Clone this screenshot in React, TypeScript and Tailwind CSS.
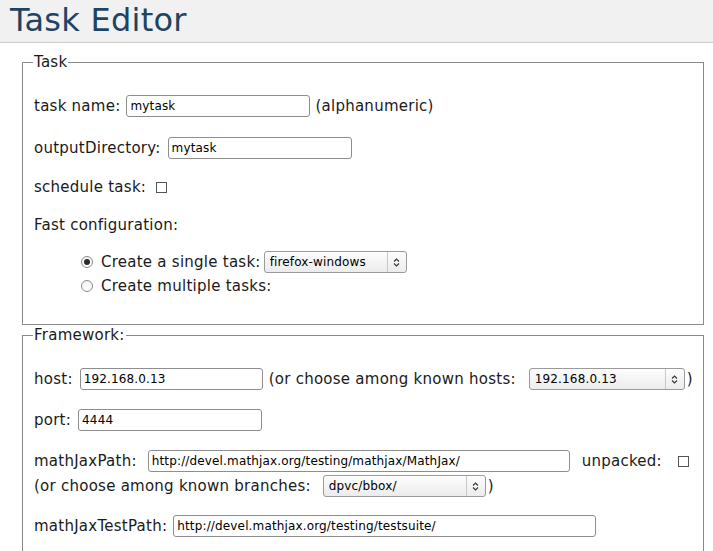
import React from "react";

const font = { fontFamily: '"DejaVu Sans", Verdana, sans-serif' };

function TextInput({ value, w }: { value: string; w: string }) {
  return (
    <div
      className={`${w} h-[22px] border border-[#8e8e8e] rounded-[3px] bg-white flex items-center px-[3px] text-[12px] tracking-[0.15px] text-black overflow-hidden whitespace-nowrap shrink-0`}
    >
      {value}
    </div>
  );
}

function Select({ value, w }: { value: string; w: string }) {
  return (
    <div
      className={`${w} h-[22px] border border-[#9a9a9a] rounded-[3px] bg-gradient-to-b from-[#fdfdfd] to-[#ececec] flex items-center text-[12px] tracking-[0.15px] text-black shrink-0`}
    >
      <span className="flex-1 pl-[5px] whitespace-nowrap overflow-hidden">{value}</span>
      <span className="w-[19px] h-full border-l border-[#c8c8c8] flex items-center justify-center">
        <svg width="7" height="11" viewBox="0 0 7 11">
          <path d="M1 4.5 L3.5 2 L6 4.5 M1 6.5 L3.5 9 L6 6.5" fill="none" stroke="#333" strokeWidth="1.1" />
        </svg>
      </span>
    </div>
  );
}

function Checkbox() {
  return <span className="inline-block w-[11px] h-[11px] border border-[#555] bg-white shrink-0" />;
}

function Radio({ checked }: { checked?: boolean }) {
  return (
    <span className="w-[12px] h-[12px] rounded-full border border-[#8a8a8a] bg-gradient-to-b from-[#f4f4f4] to-white flex items-center justify-center shrink-0">
      {checked && <span className="w-[6px] h-[6px] rounded-full bg-[#2a2a2a]" />}
    </span>
  );
}

export default function App() {
  return (
    <div className="w-[713px] min-h-[551px] bg-white text-[15px] tracking-[0.25px] text-[#1a1a1a] whitespace-nowrap" style={font}>
      <div className="h-[43px] bg-[#f1f1f1] border-b border-[#cdcdcd] flex items-center pl-[10px]">
        <h1 className="text-[32px] leading-none text-[#1e4461] mt-[-3px]">Task Editor</h1>
      </div>

      <fieldset className="border border-[#8a8a8a] ml-[22px] mr-[9px] mt-[11px] pl-[11px] pr-[2px] pb-[26px]">
        <legend className="px-[1px] ml-[-1px] leading-[16px]">Task</legend>
        <div className="h-[24px] mt-[24px] flex items-center">
          <span>task name:</span>
          <span className="ml-[6px]"><TextInput value="mytask" w="w-[184px]" /></span>
          <span className="ml-[5px]">(alphanumeric)</span>
        </div>
        <div className="h-[24px] mt-[18px] flex items-center">
          <span>outputDirectory:</span>
          <span className="ml-[7px]"><TextInput value="mytask" w="w-[184px]" /></span>
        </div>
        <div className="h-[24px] mt-[15px] flex items-center">
          <span>schedule task:</span>
          <span className="ml-[10px] flex"><Checkbox /></span>
        </div>
        <div className="h-[24px] mt-[14px] flex items-center">
          <span>Fast configuration:</span>
        </div>
        <div className="h-[24px] mt-[13px] flex items-center pl-[47px]">
          <Radio checked />
          <span className="ml-[8px]">Create a single task:</span>
          <span className="ml-[3px]"><Select value="firefox-windows" w="w-[143px]" /></span>
        </div>
        <div className="h-[24px] flex items-center pl-[47px]">
          <Radio />
          <span className="ml-[8px]">Create multiple tasks:</span>
        </div>
      </fieldset>

      <fieldset className="border border-[#8a8a8a] ml-[22px] mr-[9px] mt-[2px] pl-[11px] pr-[2px] pb-[27px]">
        <legend className="px-[1px] ml-[-1px] leading-[16px]">Framework:</legend>
        <div className="h-[24px] mt-[24px] flex items-center">
          <span className="shrink-0">host:</span>
          <span className="ml-[7px] shrink-0"><TextInput value="192.168.0.13" w="w-[183px]" /></span>
          <span className="ml-[6px] shrink-0">(or choose among known hosts:</span>
          <span className="ml-[13px] shrink-0"><Select value="192.168.0.13" w="w-[156px]" /></span>
          <span className="ml-[2px] shrink-0">)</span>
        </div>
        <div className="h-[24px] mt-[17px] flex items-center">
          <span>port:</span>
          <span className="ml-[7px]"><TextInput value="4444" w="w-[184px]" /></span>
        </div>
        <div className="h-[24px] mt-[17px] flex items-center">
          <span className="shrink-0">mathJaxPath:</span>
          <span className="ml-[11px] shrink-0"><TextInput value="http://devel.mathjax.org/testing/mathjax/MathJax/" w="w-[422px]" /></span>
          <span className="ml-[12px] shrink-0">unpacked:</span>
          <span className="ml-[16px] flex shrink-0"><Checkbox /></span>
        </div>
        <div className="h-[24px] mt-[1px] flex items-center">
          <span>(or choose among known branches:</span>
          <span className="ml-[12px]"><Select value="dpvc/bbox/" w="w-[163px]" /></span>
          <span className="ml-[2px]">)</span>
        </div>
        <div className="h-[24px] mt-[16px] flex items-center">
          <span>mathJaxTestPath:</span>
          <span className="ml-[6px]"><TextInput value="http://devel.mathjax.org/testing/testsuite/" w="w-[423px]" /></span>
        </div>
      </fieldset>
    </div>
  );
}
